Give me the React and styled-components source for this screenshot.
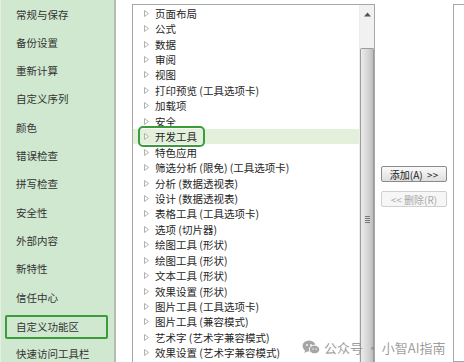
import React from "react";
import styled, { createGlobalStyle } from "styled-components";

const Global = createGlobalStyle`
  html, body { margin: 0; padding: 0; background: #fff; }
  body { font-family: "Noto Sans CJK SC", "Noto Sans", sans-serif; }
  * { box-sizing: border-box; }
`;

const Page = styled.div`
  position: relative;
  width: 464px;
  height: 362px;
  overflow: hidden;
  display: flex;
  background: #fff;
`;

const Nav = styled.div`
  width: 116px;
  flex: none;
  height: 100%;
  background: #cfe8cf;
  border-left: 1px solid #e4eee4;
  border-right: 2px solid #b4bcb4;
  display: flex;
  flex-direction: column;
  gap: 4.33px;
  padding-top: 2px;
`;

const NavItem = styled.div`
  margin-left: 4px;
  width: 103px;
  height: 24px;
  flex: none;
  display: flex;
  align-items: center;
  padding-left: 9px;
  font-size: 10.5px;
  color: #333;
  border: ${(p) => (p.$active ? "2.5px solid #3a9c3a" : "2.5px solid transparent")};
  border-radius: 2px;
  transform: ${(p) => (p.$active ? "translateY(1px)" : "none")};
`;

const Main = styled.div`
  flex: 1;
  display: flex;
  padding-top: 4px;
  padding-left: 16px;
`;

const ListBox = styled.div`
  position: relative;
  width: 243px;
  height: 380px;
  flex: none;
  border: 1px solid #a7a7a7;
  background: #fff;
  display: flex;
`;

const Rows = styled.div`
  flex: 1;
  display: flex;
  flex-direction: column;
  padding-top: 0.5px;
`;

const Row = styled.div`
  height: 15.45px;
  flex: none;
  display: flex;
  align-items: center;
  padding-left: 8px;
  background: ${(p) => (p.$hl ? "#e3f0dc" : "transparent")};
`;

const RowInner = styled.span`
  display: flex;
  align-items: center;
  gap: 6px;
  padding: 0 5px 0 1px;
  font-size: 10.5px;
  color: #262626;
  border-radius: 2px;
  outline: ${(p) => (p.$sel ? "2.5px solid #3a9c3a" : "none")};
  outline-offset: 1px;
`;

const Tri = () => (
  <svg width="5" height="7" viewBox="0 0 5 7" style={{ flex: "none", marginLeft: 2 }}>
    <path d="M0.5 0.5 L4.5 3.5 L0.5 6.5 Z" fill="#fff" stroke="#b0b0b0" strokeWidth="1" />
  </svg>
);

const Scroll = styled.div`
  width: 15px;
  flex: none;
  background: #f1f1f1;
  border-left: 1px solid #ececec;
  display: flex;
  flex-direction: column;
  align-items: center;
`;

const ArrowBox = styled.div`
  height: 43px;
  width: 100%;
  display: flex;
  justify-content: center;
  padding-top: 7px;
`;

const Thumb = styled.div`
  width: 14px;
  flex: 1;
  border: 1px solid #9c9c9c;
  border-bottom: none;
  border-radius: 2px 2px 0 0;
  background: linear-gradient(90deg, #ebebeb 0%, #dcdcdc 40%, #cfcfcf 70%, #bcbcbc 100%);
  display: flex;
  justify-content: center;
  padding-top: 167px;
`;

const Grip = styled.div`
  width: 5px;
  height: 7px;
  background: repeating-linear-gradient(180deg, #777 0 1px, transparent 1px 2px);
`;

const ButtonCol = styled.div`
  width: 78px;
  flex: none;
  display: flex;
  flex-direction: column;
  align-items: center;
  padding-top: 162px;
  gap: 9px;
`;

const Btn = styled.div`
  width: 66px;
  height: 16px;
  display: flex;
  align-items: center;
  justify-content: center;
  font-size: 10px;
  border-radius: 2px;
  border: 1px solid ${(p) => (p.$disabled ? "#cfcfcf" : "#8a8a8a")};
  color: ${(p) => (p.$disabled ? "#a9a9a9" : "#222")};
  background: ${(p) =>
    p.$disabled ? "#f6f6f6" : "linear-gradient(180deg, #fafafa 0%, #ececec 50%, #dedede 100%)"};
  white-space: pre;
`;

const RightBox = styled.div`
  flex: 1;
  height: 358px;
  border: 1px solid #a7a7a7;
  border-right: none;
`;

const Watermark = styled.div`
  position: absolute;
  left: 302px;
  top: 338px;
  display: flex;
  align-items: center;
  gap: 4px;
  font-size: 13px;
  color: rgba(140, 140, 140, 0.85);
  white-space: pre;
`;

const navItems = [
  "常规与保存", "备份设置", "重新计算", "自定义序列", "颜色", "错误检查",
  "拼写检查", "安全性", "外部内容", "新特性", "信任中心", "自定义功能区", "快速访问工具栏",
];

const rows = [
  "页面布局", "公式", "数据", "审阅", "视图", "打印预览 (工具选项卡)", "加载项", "安全",
  "开发工具", "特色应用", "筛选分析 (限免) (工具选项卡)", "分析 (数据透视表)", "设计 (数据透视表)",
  "表格工具 (工具选项卡)", "选项 (切片器)", "绘图工具 (形状)", "绘图工具 (形状)", "文本工具 (形状)",
  "效果设置 (形状)", "图片工具 (工具选项卡)", "图片工具 (兼容模式)", "艺术字 (艺术字兼容模式)",
  "效果设置 (艺术字兼容模式)",
];

const WeChat = () => (
  <svg width="18" height="15" viewBox="0 0 18 15">
    <ellipse cx="7" cy="6" rx="6.5" ry="5.5" fill="#a5a5a5" />
    <path d="M3 10 L2.5 13 L6 11 Z" fill="#a5a5a5" />
    <ellipse cx="12.5" cy="9.5" rx="5.2" ry="4.3" fill="#a5a5a5" stroke="#fff" strokeWidth="1" />
    <circle cx="5" cy="5" r="0.9" fill="#fff" />
    <circle cx="9" cy="5" r="0.9" fill="#fff" />
    <circle cx="11" cy="9" r="0.7" fill="#fff" />
    <circle cx="14" cy="9" r="0.7" fill="#fff" />
  </svg>
);

export default function App() {
  return (
    <>
      <Global />
      <Page>
        <Nav>
          {navItems.map((t) => (
            <NavItem key={t} $active={t === "自定义功能区"}>{t}</NavItem>
          ))}
        </Nav>
        <Main>
          <ListBox>
            <Rows>
              {rows.map((t, i) => (
                <Row key={i} $hl={t === "开发工具"}>
                  <RowInner $sel={t === "开发工具"}>
                    <Tri />
                    {t}
                  </RowInner>
                </Row>
              ))}
            </Rows>
            <Scroll>
              <ArrowBox>
                <svg width="7" height="5" viewBox="0 0 7 5">
                  <path d="M0 4.5 L3.5 0.5 L7 4.5 Z" fill="#555" />
                </svg>
              </ArrowBox>
              <Thumb>
                <Grip />
              </Thumb>
            </Scroll>
          </ListBox>
          <ButtonCol>
            <Btn>{"添加(A)  >>"}</Btn>
            <Btn $disabled>{"<< 删除(R)"}</Btn>
          </ButtonCol>
          <RightBox />
        </Main>
        <Watermark>
          <WeChat />
          {"公众号 · 小智AI指南"}
        </Watermark>
      </Page>
    </>
  );
}
